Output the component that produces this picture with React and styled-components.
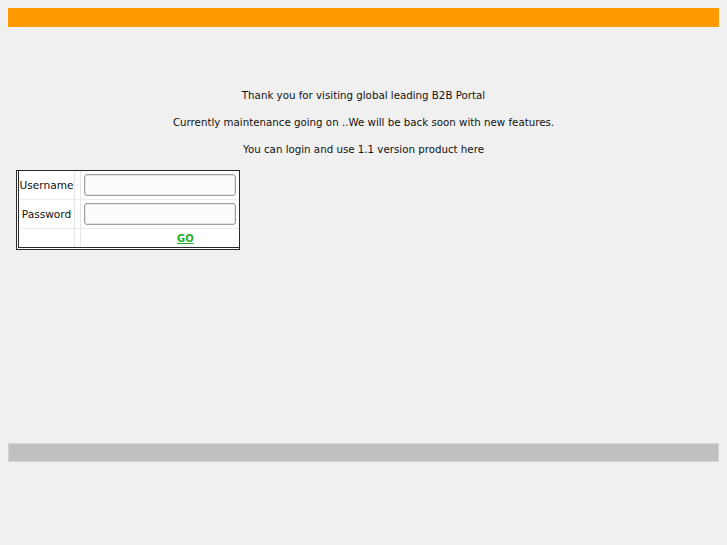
import React from "react";
import styled, { createGlobalStyle } from "styled-components";

const GlobalStyle = createGlobalStyle`
  body {
    margin: 8px;
    background: #f0f0f0;
    font-family: "DejaVu Sans", Verdana, sans-serif;
    color: #111;
  }
`;

const TopBar = styled.div`
  height: 19px;
  background: #ff9a00;
`;

const Content = styled.div`
  height: 416px;
  padding-top: 60px;
  box-sizing: border-box;
`;

const Message = styled.p`
  margin: 0 0 11px;
  font-size: 10.25px;
  line-height: 16px;
  text-align: center;
`;

const LoginTable = styled.table`
  box-sizing: border-box;
  width: 224px;
  table-layout: fixed;
  margin: 13px 0 0 8px;
  background: #fff;
  border-collapse: separate;
  border-spacing: 0;
  border: 1px solid #2a2a2a;
  border-left: 3px double #2a2a2a;
  border-bottom: 3px double #2a2a2a;
  font-size: 10.6px;
`;

const Row = styled.tr`
  & > td {
    border-bottom: ${(p) => (p.$last ? "0" : "1px solid #ececec")};
  }
`;

const LabelCell = styled.td`
  padding: 0;
  border-right: 1px solid #e6e6e6;
  text-align: center;
  white-space: nowrap;
`;

const FieldCell = styled.td`
  padding: 3px 0 3px 9px;
  background: linear-gradient(#e6e6e6, #e6e6e6) 5px 0 / 1px 100% no-repeat;
`;

const TextInput = styled.input`
  display: block;
  box-sizing: border-box;
  width: 152px;
  height: 22px;
  margin: 0;
  border: 1px solid #a0a0a0;
  border-radius: 3px;
  background: #fcfcfc;
  box-shadow: inset 0 0 0 1px #e4e4e4;
`;

const GoLink = styled.a`
  display: inline-block;
  margin: 0 0 0 93px;
  font-size: 10px;
  font-weight: bold;
  color: #22b022;
  text-decoration: underline;
`;

const BottomBar = styled.div`
  height: 17px;
  background: #c0c0c0;
  border: 1px solid #d4d4d4;
`;

export default function App() {
  return (
    <>
      <GlobalStyle />
      <TopBar />
      <Content>
        <Message>Thank you for visiting global leading B2B Portal</Message>
        <Message>Currently maintenance going on ..We will be back soon with new features.</Message>
        <Message>You can login and use 1.1 version product here</Message>
        <LoginTable>
          <colgroup>
            <col style={{ width: 56 }} />
            <col />
          </colgroup>
          <tbody>
            <Row>
              <LabelCell>Username</LabelCell>
              <FieldCell>
                <TextInput type="text" />
              </FieldCell>
            </Row>
            <Row>
              <LabelCell>Password</LabelCell>
              <FieldCell>
                <TextInput type="password" />
              </FieldCell>
            </Row>
            <Row $last>
              <LabelCell />
              <FieldCell>
                <GoLink href="#">GO</GoLink>
              </FieldCell>
            </Row>
          </tbody>
        </LoginTable>
      </Content>
      <BottomBar />
    </>
  );
}
